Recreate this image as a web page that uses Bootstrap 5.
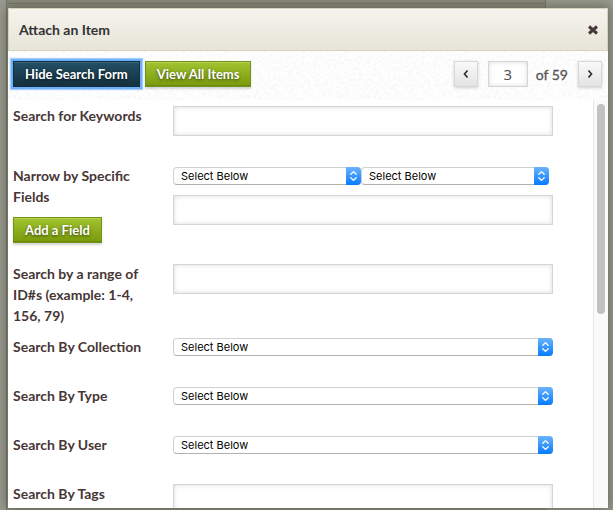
<!DOCTYPE html>
<html lang="en">
<head>
<meta charset="utf-8">
<meta name="viewport" content="width=device-width, initial-scale=1">
<title>Attach an Item</title>
<link href="https://cdn.jsdelivr.net/npm/bootstrap@5.3.0/dist/css/bootstrap.min.css" rel="stylesheet">
<style>
body {
  font: 700 14px/21px Lato, "Open Sans", sans-serif;
  color: #483636;
  background: #9c9d92;
}
.backdrop-page {
  padding: 8px 5px 2px 8px;
  background:
    linear-gradient(#77786b, #77786b) 6px 3px / 540px 1px no-repeat,
    linear-gradient(#77786b, #77786b) 6px 0 / 1px 100% no-repeat,
    linear-gradient(#77786b, #77786b) 545px 0 / 1px 8px no-repeat,
    linear-gradient(#8e8e7f, #8e8e7f) 6px 0 / 540px 100% no-repeat;
}
.dialog-box { background: #fff; box-shadow: 0 0 12px 2px rgba(60, 62, 48, .55); }
.dialog-head {
  height: 43px;
  padding: 0 8px 0 10px;
  border: 1px solid #d5d3bf;
  background: linear-gradient(#f5f3ed, #e7e4d8);
  color: #333;
}
.dialog-head h1 { font-size: 14px; line-height: 21px; }
.close-btn { width: 12px; height: 12px; color: #4a3838; }
.tool-row {
  padding: 10px 6px 13px 5px;
  background: #fcfcfc url("data:image/svg+xml,%3Csvg xmlns='http://www.w3.org/2000/svg' width='120' height='50'%3E%3Cfilter id='n' x='0' y='0' width='1' height='1'%3E%3CfeTurbulence type='fractalNoise' baseFrequency='.35' numOctaves='2' stitchTiles='stitch'/%3E%3CfeColorMatrix values='0 0 0 0 .7 0 0 0 0 .7 0 0 0 0 .7 .5 0 0 0 -.18'/%3E%3C/filter%3E%3Crect width='120' height='50' fill='white'/%3E%3Crect width='120' height='50' filter='url(%23n)'/%3E%3C/svg%3E");
}
.act {
  height: 26px;
  padding: 0 11px;
  border: 1px solid #73921a;
  border-radius: 0;
  background: linear-gradient(#a2c431, #789a0c);
  box-shadow: inset 0 1px 0 #b5d24c, inset 0 -1px 0 #6d8c0c, 0 2px 2px rgba(0, 0, 0, .16);
  color: #fff;
  font-size: 13px;
  font-weight: 700;
  line-height: 24px;
  text-shadow: 0 1px 3px rgba(0, 0, 0, .6);
  white-space: nowrap;
}
.act-dark {
  border-color: #12303f;
  background: linear-gradient(#235067, #142f3d);
  box-shadow: inset 0 1px 0 #37647a, 0 0 0 2px #6eaffa, 0 0 1px 3px #a9d0fc;
}
.act-pair { gap: 5px; }
.act-add { margin: 10px 0; }
.step {
  width: 24px;
  height: 26px;
  border: 1px solid #d8d8d8;
  background: linear-gradient(#fafafa, #e3e3e3);
  box-shadow: 0 1px 3px rgba(0, 0, 0, .18);
  color: #333;
}
.box {
  display: block;
  width: 100%;
  height: 30px;
  border: 1px solid #d5d5d5;
  border-radius: 0;
  background: #fff;
  box-shadow: inset 0 0 5px rgba(0, 0, 0, .14);
}
.pager { gap: 10px; }
.page-no { width: 40px; height: 26px; text-align: center; color: #555; font: 400 15px/24px "Noto Sans", sans-serif; }
.page-total { color: #555; font: 400 14px/21px Lato, sans-serif; -webkit-text-stroke: .3px #555; }
.scroll-zone { min-height: 0; }
.search-form { padding: 5px 40px 0 5px; min-height: 0; }
.entry { display: grid; grid-template-columns: 160px minmax(0, 1fr); align-items: start; }
.entry-name { padding-right: 30px; margin-bottom: 10px; }
.entry-name label { display: block; }
.entry-body { padding: 1px 0 29px; }
.pick { position: relative; margin-top: 1px; }
.pick select {
  display: block;
  appearance: none;
  width: 100%;
  height: 18px;
  padding: 0 20px 0 7px;
  border: 1px solid #d0d0d0;
  border-bottom-color: #b0b0b0;
  border-radius: 4px;
  background: #fff;
  color: #000;
  font: 400 11px/16px Inter, "Open Sans", sans-serif;
}
.pick svg {
  position: absolute;
  top: 0;
  right: 0;
  width: 15px;
  height: 18px;
  border-radius: 0 4px 4px 0;
  background: linear-gradient(#6cb3fa, #067bff);
  pointer-events: none;
}
.pair { padding-right: 4px; margin-bottom: 10px; }
.track { width: 15px; padding: 4px 3px 0; background: #fafafa; border-left: 1px solid #e6e6e6; }
.thumb { width: 8px; height: 52%; border-radius: 4px; background: #c1c1c1; }
</style>
<script src="https://cdn.jsdelivr.net/npm/bootstrap@5.3.0/dist/js/bootstrap.bundle.min.js"></script>
</head>
<body>
<svg class="d-none" aria-hidden="true">
  <symbol id="updown" viewBox="0 0 15 18"><path d="M4.8 7.3 7.5 4.6l2.7 2.7M4.8 10.7l2.7 2.7 2.7-2.7" fill="none" stroke="#fff" stroke-width="1.3" stroke-linecap="round" stroke-linejoin="round"/></symbol>
</svg>
<div class="backdrop-page vh-100 overflow-hidden">
  <main class="dialog-box d-flex flex-column h-100">
    <header class="dialog-head d-flex align-items-center justify-content-between flex-shrink-0">
      <h1 class="m-0 fw-bold">Attach an Item</h1>
      <button class="close-btn btn p-0 border-0 d-flex" type="button" aria-label="Close">
        <svg viewBox="0 0 12 12" width="12" height="12" aria-hidden="true"><path d="m2 2.5 8 7m0-7-8 7" stroke="currentColor" stroke-width="3"/></svg>
      </button>
    </header>
    <div class="tool-row d-flex justify-content-between flex-shrink-0">
      <div class="act-pair d-flex">
        <button class="act act-dark" type="button">Hide Search Form</button>
        <button class="act" type="button">View All Items</button>
      </div>
      <div class="pager d-flex align-items-center">
        <button class="step p-0 d-flex align-items-center justify-content-center" type="button" aria-label="Previous page"><svg width="8" height="10" viewBox="0 0 8 10" aria-hidden="true"><path d="M5.5 1.5 2.5 5l3 3.5" fill="none" stroke="currentColor" stroke-width="1.7"/></svg></button>
        <div class="d-flex align-items-center gap-2">
          <input class="box page-no p-0" id="page" type="text" value="3">
          <label class="page-total" for="page">of 59</label>
        </div>
        <button class="step p-0 d-flex align-items-center justify-content-center" type="button" aria-label="Next page"><svg width="8" height="10" viewBox="0 0 8 10" aria-hidden="true"><path d="m2.5 1.5 3 3.5-3 3.5" fill="none" stroke="currentColor" stroke-width="1.7"/></svg></button>
      </div>
    </div>
    <div class="scroll-zone d-flex flex-fill">
      <form class="search-form flex-fill overflow-hidden">
        <div class="entry">
          <div class="entry-name"><label for="keywords">Search for Keywords</label></div>
          <div class="entry-body"><input class="box" id="keywords" type="text"></div>
        </div>
        <div class="entry">
          <div class="entry-name">
            <label for="terms">Narrow by Specific Fields</label>
            <button class="act act-add" type="button">Add a Field</button>
          </div>
          <div class="entry-body">
            <div class="pair d-flex">
              <div class="pick flex-fill"><select aria-label="Field"><option>Select Below</option></select><svg aria-hidden="true"><use href="#updown"/></svg></div>
              <div class="pick flex-fill"><select aria-label="Condition"><option>Select Below</option></select><svg aria-hidden="true"><use href="#updown"/></svg></div>
            </div>
            <input class="box" id="terms" type="text">
          </div>
        </div>
        <div class="entry">
          <div class="entry-name"><label for="range">Search by a range of ID#s (example: 1-4, 156, 79)</label></div>
          <div class="entry-body"><input class="box" id="range" type="text"></div>
        </div>
        <div class="entry">
          <div class="entry-name"><label for="collection">Search By Collection</label></div>
          <div class="entry-body"><div class="pick"><select id="collection"><option>Select Below</option></select><svg aria-hidden="true"><use href="#updown"/></svg></div></div>
        </div>
        <div class="entry">
          <div class="entry-name"><label for="type">Search By Type</label></div>
          <div class="entry-body"><div class="pick"><select id="type"><option>Select Below</option></select><svg aria-hidden="true"><use href="#updown"/></svg></div></div>
        </div>
        <div class="entry">
          <div class="entry-name"><label for="user">Search By User</label></div>
          <div class="entry-body"><div class="pick"><select id="user"><option>Select Below</option></select><svg aria-hidden="true"><use href="#updown"/></svg></div></div>
        </div>
        <div class="entry">
          <div class="entry-name"><label for="tags">Search By Tags</label></div>
          <div class="entry-body"><input class="box" id="tags" type="text"></div>
        </div>
      </form>
      <div class="track flex-shrink-0" aria-hidden="true"><div class="thumb"></div></div>
    </div>
  </main>
</div>
</body>
</html>
